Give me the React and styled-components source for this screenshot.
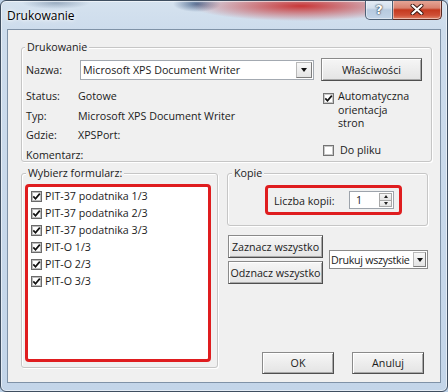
import React from 'react';
import styled, { createGlobalStyle } from 'styled-components';

const GlobalStyle = createGlobalStyle`
  html, body {
    margin: 0;
    padding: 0;
    width: 448px;
    height: 392px;
    overflow: hidden;
    background: #bcd0e6;
  }
  body {
    font-family: "Open Sans", "Noto Sans", "DejaVu Sans", sans-serif;
    font-size: 10.7px;
    color: #1b1b1b;
  }
`;

// window frame (aero glass)
const Window = styled.div`
  box-sizing: border-box;
  width: 448px;
  height: 392px;
  display: flex;
  flex-direction: column;
  border: 1px solid #3f4e60;
  border-radius: 6px;
  background:
    radial-gradient(ellipse 110px 15px at 300px 5px, rgba(200, 45, 45, 0.95), rgba(200, 45, 45, 0) 100%),
    radial-gradient(ellipse 24px 8px at 196px 3px, rgba(35, 65, 110, 0.7), rgba(35, 65, 110, 0) 100%),
    radial-gradient(ellipse 34px 6px at 55px 2px, rgba(70, 95, 125, 0.4), rgba(70, 95, 125, 0) 100%),
    linear-gradient(180deg, #d5e2ef 0px, #cddcec 28px, #c3d5e9 100%);
  box-shadow: inset 0 0 0 1px rgba(255, 255, 255, 0.55);
  overflow: hidden;
`;

const TitleBar = styled.div`
  height: 28px;
  display: flex;
  align-items: flex-start;
  padding-left: 6px;
`;

const Title = styled.div`
  margin-top: 7px;
  font-size: 12px;
  line-height: 16px;
  color: #000;
  text-shadow: 0 0 6px #fff, 0 0 3px #fff;
`;

const CaptionButtons = styled.div`
  margin-left: auto;
  margin-right: 5px;
  margin-top: -1px;
  display: flex;
`;

const CaptionButton = styled.div`
  box-sizing: border-box;
  width: ${p => p.$w}px;
  height: 20px;
  display: flex;
  align-items: center;
  justify-content: center;
  border: 1px solid ${p => (p.$close ? '#5b2a22' : '#4d6075')};
  border-top: none;
  border-left-width: ${p => (p.$close ? 0 : 1)}px;
  border-radius: ${p => (p.$close ? '0 0 5px 0' : '0 0 0 5px')};
  background: ${p =>
    p.$close
      ? 'linear-gradient(180deg, #e7aa9c 0%, #d9826f 42%, #c4391f 52%, #cf4f36 80%, #e0866b 100%)'
      : 'linear-gradient(180deg, #e6edf6 0%, #d3dfec 42%, #b7cadf 52%, #c2d4e8 100%)'};
  box-shadow: inset 0 0 0 1px rgba(255, 255, 255, 0.45);
  color: #fff;
  font-family: "DejaVu Sans", sans-serif;
  font-weight: bold;
  font-size: 13px;
  text-shadow: 0 0 2px #1d2a3a, 0 0 1px #1d2a3a;
`;

const Client = styled.div`
  flex: 1;
  margin: 0 6px 8px 6px;
  border: 1px solid #7f92a7;
  background: #f0f0f0;
  padding: 17px 8px 0 13px;
  display: flex;
  flex-direction: column;
`;

// group box
const Group = styled.div`
  box-sizing: border-box;
  border: 1px solid #c6c6c6;
  border-radius: 3px;
  box-shadow: inset 1px 1px 0 #fff, 1px 1px 0 #fff;
  padding: 0 ${p => p.$pr || 0}px ${p => p.$pb || 0}px ${p => p.$pl || 0}px;
  width: ${p => (p.$w ? `${p.$w}px` : 'auto')};
  height: ${p => (p.$h ? `${p.$h}px` : 'auto')};
  display: flex;
  flex-direction: column;
`;

const Legend = styled.div`
  align-self: flex-start;
  margin: -8px 0 0 ${p => p.$x}px;
  padding: 0 2px;
  line-height: 14px;
  background: #f0f0f0;
`;

const GroupBody = styled.div`
  display: flex;
  gap: 7px;
`;

const LeftCol = styled.div`
  width: 288px;
  display: flex;
  flex-direction: column;
`;

const RightCol = styled.div`
  width: 101px;
  display: flex;
  flex-direction: column;
`;

const NameRow = styled.div`
  height: 23px;
  margin-top: 4px;
  display: flex;
  align-items: center;
`;

const FieldLabel = styled.div`
  width: ${p => p.$w}px;
  flex-shrink: 0;
`;

const Combo = styled.div`
  box-sizing: border-box;
  width: ${p => p.$w}px;
  height: ${p => p.$h}px;
  display: flex;
  align-items: center;
  background: #fff;
  border: 1px solid ${p => p.$border || '#a3a9b1'};
  padding-left: ${p => (p.$tight ? 1 : 2)}px;
  line-height: 14px;
  white-space: nowrap;
  letter-spacing: ${p => (p.$tight ? '-0.3px' : 'normal')};
`;

const ComboText = styled.div`
  flex: 1;
  overflow: hidden;
`;

const ArrowBox = styled.div`
  box-sizing: border-box;
  width: ${p => p.$w}px;
  flex-shrink: 0;
  align-self: stretch;
  margin: 1px;
  display: flex;
  align-items: center;
  justify-content: center;
  border: 1px solid #b9b9b9;
  border-right-color: #7d7d7d;
  border-bottom-color: #7d7d7d;
  background: linear-gradient(180deg, #f8f8f8, #e4e4e4);
`;

const DownTriangle = styled.div`
  width: 0;
  height: 0;
  border-left: 3.5px solid transparent;
  border-right: 3.5px solid transparent;
  border-top: 4px solid #111;
`;

const InfoList = styled.div`
  margin-top: 9px;
  display: flex;
  flex-direction: column;
  gap: 7.7px;
`;

const InfoRow = styled.div`
  display: flex;
  line-height: 12px;
  height: 12px;
`;

const Button = styled.div`
  box-sizing: border-box;
  width: ${p => p.$w}px;
  height: ${p => p.$h || 23}px;
  margin-top: ${p => p.$mt || 0}px;
  display: flex;
  align-items: center;
  justify-content: center;
  white-space: nowrap;
  border: 1px solid #8a8a8a;
  border-right-color: #4f4f4f;
  border-bottom-color: #4f4f4f;
  background: linear-gradient(180deg, #f6f6f6 0%, #ededed 50%, #e4e4e4 100%);
  box-shadow: inset 1px 1px 0 #fff, inset -1px -1px 0 #a9a9a9;
`;

const CheckRow = styled.label`
  display: flex;
  align-items: ${p => (p.$top ? 'flex-start' : 'center')};
  margin-top: ${p => p.$mt}px;
  margin-left: 2px;
  line-height: 13.5px;
`;

const Box = styled.span`
  box-sizing: border-box;
  width: 11px;
  height: 11px;
  flex-shrink: 0;
  margin-top: ${p => (p.$top ? 3 : 0)}px;
  margin-right: ${p => p.$gap}px;
  display: flex;
  align-items: center;
  justify-content: center;
  border: 1px solid #747474;
  background: #fff;
  box-shadow: inset 0 0 0 1px #c9c9c9;
`;

const Tick = () => (
  <svg width="9" height="9" viewBox="0 0 9 9">
    <path d="M1.3 4.4 L3.5 6.8 L7.8 1.6" fill="none" stroke="#111" strokeWidth="1.7" />
  </svg>
);

const BottomRow = styled.div`
  margin-top: 11px;
  display: flex;
  align-items: flex-start;
  gap: 9px;
`;

const RedFrame = styled.div`
  box-sizing: border-box;
  width: ${p => p.$w}px;
  height: ${p => p.$h}px;
  margin: ${p => p.$mt}px 0 0 ${p => p.$ml || 0}px;
  border: 3px solid #df1d1f;
  border-radius: 4px;
  background: ${p => p.$bg || 'transparent'};
`;

const FormList = styled.div`
  padding: 0.5px 0 0 3px;
  display: flex;
  flex-direction: column;
`;

const FormItem = styled.div`
  height: 17px;
  display: flex;
  align-items: center;
  white-space: nowrap;
`;

const ListBox = styled(Box)`
  border-color: #6a6a6a;
  box-shadow: inset 0 0 0 1px #bdbdbd;
`;

const SideCol = styled.div`
  width: 201px;
  display: flex;
  flex-direction: column;
`;

const CopiesRow = styled.div`
  height: 100%;
  box-sizing: border-box;
  padding: 0 5px 0 6px;
  display: flex;
  align-items: center;
  justify-content: space-between;
`;

const CopiesLabel = styled.div`
  margin-top: 2px;
`;

const Spinner = styled.div`
  box-sizing: border-box;
  width: 45px;
  height: 18px;
  display: flex;
  align-items: center;
  background: #fff;
  border: 1px solid #9da3ab;
  padding-left: 6px;
`;

const SpinButtons = styled.div`
  margin-left: auto;
  margin-right: 1px;
  width: 13px;
  height: 14px;
  display: flex;
  flex-direction: column;
  border: 1px solid #a8a8a8;
  box-sizing: border-box;
`;

const SpinHalf = styled.div`
  flex: 1;
  display: flex;
  align-items: center;
  justify-content: center;
  background: linear-gradient(180deg, #f7f7f7, #e2e2e2);
  border-top: ${p => (p.$down ? '1px solid #a8a8a8' : 'none')};
`;

const Tri = styled.div`
  width: 0;
  height: 0;
  border-left: 2.5px solid transparent;
  border-right: 2.5px solid transparent;
  ${p => (p.$up ? 'border-bottom: 3px solid #222;' : 'border-top: 3px solid #222;')}
`;

const SelectRow = styled.div`
  margin-top: 9px;
  margin-left: 1px;
  display: flex;
  align-items: center;
  gap: 6px;
`;

const ButtonStack = styled.div`
  display: flex;
  flex-direction: column;
  gap: 3px;
`;

const Footer = styled.div`
  margin-top: 68px;
  padding-right: 4px;
  display: flex;
  justify-content: flex-end;
  gap: 18px;
`;

const forms = [
  'PIT-37 podatnika 1/3',
  'PIT-37 podatnika 2/3',
  'PIT-37 podatnika 3/3',
  'PIT-O 1/3',
  'PIT-O 2/3',
  'PIT-O 3/3',
];

const info = [
  ['Status:', 'Gotowe'],
  ['Typ:', 'Microsoft XPS Document Writer'],
  ['Gdzie:', 'XPSPort:'],
  ['Komentarz:', ''],
];

export default function App() {
  return (
    <>
      <GlobalStyle />
      <Window>
        <TitleBar>
          <Title>Drukowanie</Title>
          <CaptionButtons>
            <CaptionButton $w={28}>?</CaptionButton>
            <CaptionButton $w={49} $close>
              <svg width="14" height="11" viewBox="0 0 14 11">
                <path d="M2.5 1.5 L11.5 9.5 M11.5 1.5 L2.5 9.5" stroke="#3a1510" strokeWidth="4" strokeLinecap="round" />
                <path d="M2.5 1.5 L11.5 9.5 M11.5 1.5 L2.5 9.5" stroke="#fff" strokeWidth="2.2" strokeLinecap="round" />
              </svg>
            </CaptionButton>
          </CaptionButtons>
        </TitleBar>

        <Client>
          <Group $w={411} $pl={4} $pr={9}>
            <Legend $x={-1}>Drukowanie</Legend>
            <GroupBody>
              <LeftCol>
                <NameRow>
                  <FieldLabel $w={54}>Nazwa:</FieldLabel>
                  <Combo $w={234} $h={20}>
                    <ComboText>Microsoft XPS Document Writer</ComboText>
                    <ArrowBox $w={16}>
                      <DownTriangle />
                    </ArrowBox>
                  </Combo>
                </NameRow>
                <InfoList>
                  {info.map(([k, v]) => (
                    <InfoRow key={k}>
                      <FieldLabel $w={52}>{k}</FieldLabel>
                      <div>{v}</div>
                    </InfoRow>
                  ))}
                </InfoList>
              </LeftCol>
              <RightCol>
                <Button $w={101} $mt={4}>Właściwości</Button>
                <CheckRow $mt={9} $top>
                  <Box $gap={4} $top>
                    <Tick />
                  </Box>
                  <span>
                    Automatyczna
                    <br />
                    orientacja
                    <br />
                    stron
                  </span>
                </CheckRow>
                <CheckRow $mt={13}>
                  <Box $gap={6} />
                  <span>Do pliku</span>
                </CheckRow>
              </RightCol>
            </GroupBody>
          </Group>

          <BottomRow>
            <Group $w={197} $h={195} $pl={3}>
              <Legend $x={1}>Wybierz formularz:</Legend>
              <RedFrame $w={186} $h={178} $mt={4} $bg="#fff">
                <FormList>
                  {forms.map(f => (
                    <FormItem key={f}>
                      <ListBox $gap={3}>
                        <Tick />
                      </ListBox>
                      {f}
                    </FormItem>
                  ))}
                </FormList>
              </RedFrame>
            </Group>

            <SideCol>
              <Group $w={201} $h={53}>
                <Legend $x={4}>Kopie</Legend>
                <RedFrame $w={137} $h={30} $mt={5} $ml={37}>
                  <CopiesRow>
                    <CopiesLabel>Liczba kopii:</CopiesLabel>
                    <Spinner>
                      1
                      <SpinButtons>
                        <SpinHalf>
                          <Tri $up />
                        </SpinHalf>
                        <SpinHalf $down>
                          <Tri />
                        </SpinHalf>
                      </SpinButtons>
                    </Spinner>
                  </CopiesRow>
                </RedFrame>
              </Group>

              <SelectRow>
                <ButtonStack>
                  <Button $w={95}>Zaznacz wszystko</Button>
                  <Button $w={95}>Odznacz wszystko</Button>
                </ButtonStack>
                <Combo $w={99} $h={19} $border="#8a8a8a" $tight>
                  <ComboText>Drukuj wszystkie</ComboText>
                  <ArrowBox $w={13}>
                    <DownTriangle />
                  </ArrowBox>
                </Combo>
              </SelectRow>

              <Footer>
                <Button $w={72} $h={22}>OK</Button>
                <Button $w={72} $h={22}>Anuluj</Button>
              </Footer>
            </SideCol>
          </BottomRow>
        </Client>
      </Window>
    </>
  );
}
